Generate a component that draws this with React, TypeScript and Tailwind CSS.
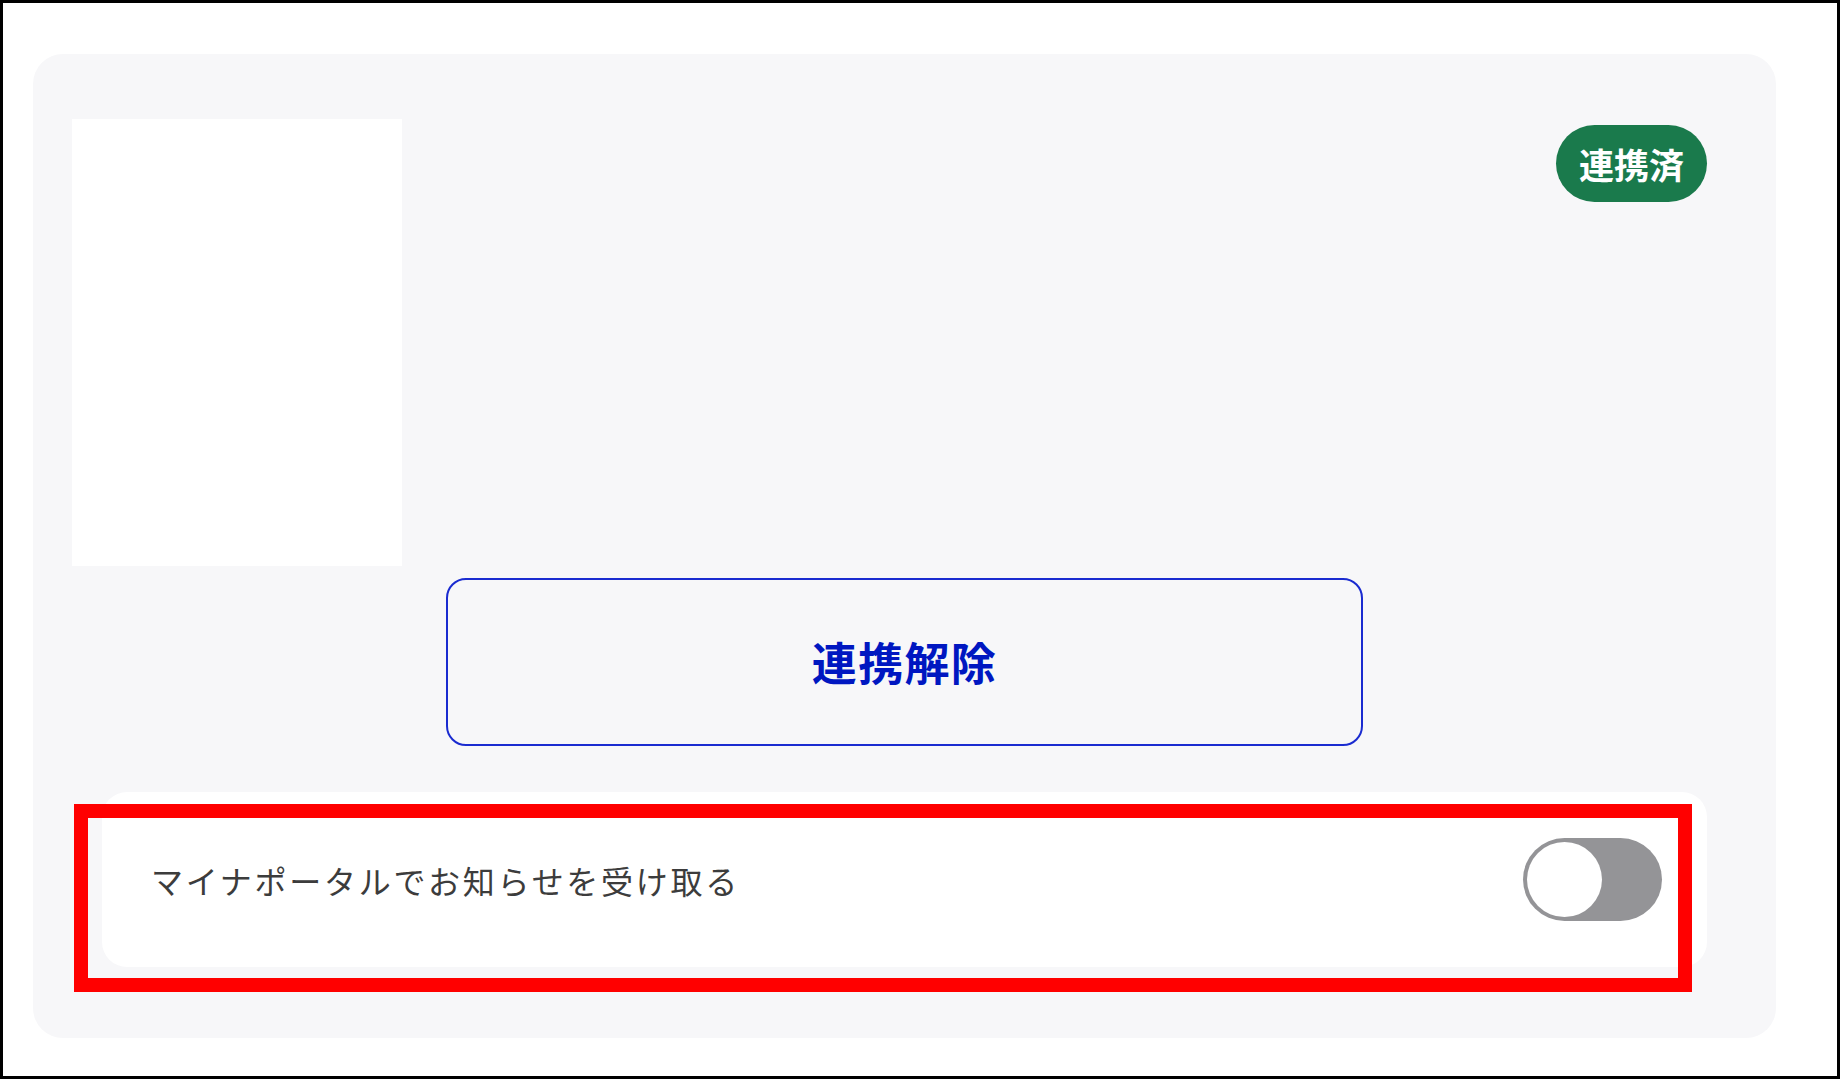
import { FC, useState } from "react";

const font = "font-['Noto_Sans_CJK_JP','Noto_Sans',sans-serif]";

const Toggle: FC<{ on: boolean; onChange: (v: boolean) => void }> = ({ on, onChange }) => {
  return (
    <button
      type="button"
      onClick={() => onChange(!on)}
      className={`flex items-center w-[139px] h-[83px] rounded-full p-[4px] ${on ? "bg-[#0017c1] justify-end" : "bg-[#949497] justify-start"}`}
    >
      <span className="block w-[75px] h-[75px] rounded-full bg-white" />
    </button>
  );
};

export default function App() {
  const [notify, setNotify] = useState(false);

  return (
    <div className={`w-[1840px] h-[1079px] border-[3px] border-black bg-white ${font}`}>
      <div className="ml-[30px] mt-[51px] w-[1743px] rounded-[30px] bg-[#f7f7f9] px-[39px] pt-[65px] pb-[71px]">
        <div className="flex justify-between items-start">
          <div className="w-[330px] h-[447px] bg-white" />
          <span className="mt-[6px] mr-[30px] flex items-center justify-center h-[77px] px-[23px] rounded-full bg-[#1a7a4c] text-white text-[35px] font-bold leading-none">
            連携済
          </span>
        </div>

        <div className="flex justify-center mt-[12px]">
          <button className="w-[917px] h-[168px] rounded-[20px] border-2 border-[#1a2bd0] text-[#0017c1] text-[45px] font-bold tracking-[0.03em]">
            連携解除
          </button>
        </div>

        <div className="relative mx-[30px] mt-[46px] h-[175px] rounded-[25px] bg-white flex items-center justify-between pl-[49px] pr-[45px]">
          <p className="text-[32px] tracking-[0.085em] text-[#3c3c3c]">マイナポータルでお知らせを受け取る</p>
          <Toggle on={notify} onChange={setNotify} />
          <div className="absolute left-[-28px] top-[12px] w-[1618px] h-[188px] border-[14px] border-[#ff0000] pointer-events-none" />
        </div>
      </div>
    </div>
  );
}
